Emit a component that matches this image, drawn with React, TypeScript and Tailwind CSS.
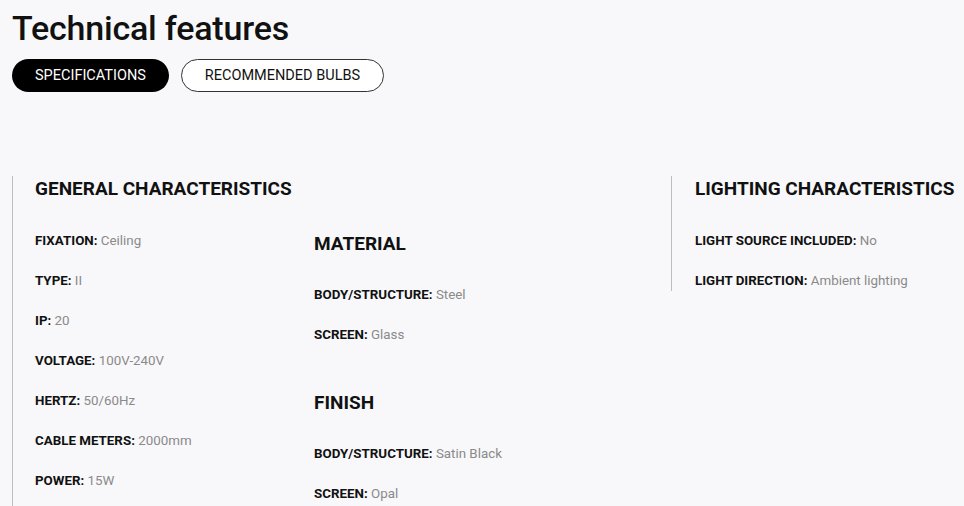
const font = { fontFamily: "Roboto, 'Liberation Sans', sans-serif" };

type Spec = { label: string; value: string };

const general: Spec[] = [
  { label: "FIXATION", value: "Ceiling" },
  { label: "TYPE", value: "II" },
  { label: "IP", value: "20" },
  { label: "VOLTAGE", value: "100V-240V" },
  { label: "HERTZ", value: "50/60Hz" },
  { label: "CABLE METERS", value: "2000mm" },
  { label: "POWER", value: "15W" },
];

const material: Spec[] = [
  { label: "BODY/STRUCTURE", value: "Steel" },
  { label: "SCREEN", value: "Glass" },
];

const finish: Spec[] = [
  { label: "BODY/STRUCTURE", value: "Satin Black" },
  { label: "SCREEN", value: "Opal" },
];

const lighting: Spec[] = [
  { label: "LIGHT SOURCE INCLUDED", value: "No" },
  { label: "LIGHT DIRECTION", value: "Ambient lighting" },
];

function Item({ spec }: { spec: Spec }) {
  return (
    <p className="text-[13.35px] leading-[20px] whitespace-nowrap">
      <span className="font-bold text-[#111]">{spec.label}:</span>{" "}
      <span className="text-[#8a8a8a]">{spec.value}</span>
    </p>
  );
}

export default function App() {
  return (
    <div className="min-h-screen bg-[#f8f8fa] px-3 pt-2 overflow-hidden" style={font}>
      {/* Header */}
      <h1 className="text-[34px] leading-[40px] font-medium text-[#111] tracking-[-0.2px]">
        Technical features
      </h1>
      <div className="flex gap-3 mt-[11px]">
        <button className="h-[33px] px-[23px] rounded-full bg-black text-white text-[14.5px]">
          SPECIFICATIONS
        </button>
        <button className="h-[33px] px-[23px] rounded-full bg-white border border-[#333] text-[#111] text-[14.5px]">
          RECOMMENDED BULBS
        </button>
      </div>

      {/* Sections */}
      <div className="flex items-start mt-[84px]">
        <div className="w-[659px] shrink-0 border-l border-[#bdbdbd] pl-[22px] pb-10">
          <h2 className="text-[19px] leading-6 font-bold text-[#111] mt-px">GENERAL CHARACTERISTICS</h2>
          <div className="flex mt-[30px]">
            <div className="w-[279px] flex flex-col gap-5">
              {general.map((s) => (
                <Item key={s.label} spec={s} />
              ))}
            </div>
            <div className="flex flex-col">
              <h3 className="text-[19px] leading-[26px] font-bold text-[#111]">MATERIAL</h3>
              <div className="flex flex-col gap-5 mt-[28px]">
                {material.map((s) => (
                  <Item key={s.label} spec={s} />
                ))}
              </div>
              <h3 className="text-[19px] leading-[26px] font-bold text-[#111] mt-[45px]">FINISH</h3>
              <div className="flex flex-col gap-5 mt-[28px]">
                {finish.map((s) => (
                  <Item key={s.label} spec={s} />
                ))}
              </div>
            </div>
          </div>
        </div>
        <div className="flex-1 border-l border-[#bdbdbd] pl-[23px]">
          <h2 className="text-[19px] leading-6 font-bold text-[#111] whitespace-nowrap mt-px">
            LIGHTING CHARACTERISTICS
          </h2>
          <div className="flex flex-col gap-5 mt-[30px]">
            {lighting.map((s) => (
              <Item key={s.label} spec={s} />
            ))}
          </div>
        </div>
      </div>
    </div>
  );
}
